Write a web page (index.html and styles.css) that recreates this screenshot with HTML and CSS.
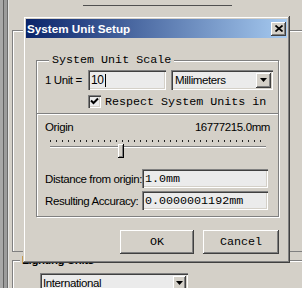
FILE: index.html
```html
<!DOCTYPE html>
<html lang="en">
<head>
    <meta charset="UTF-8">
    <title>System Unit Setup</title>
    <link rel="stylesheet" href="styles.css">
</head>
<body>
    <div id="screen">
        <div id="main">
            <div id="strip"></div>
            <div id="back">
                <div id="top-field"></div>
                <div class="bg-group" id="bg-scale"></div>
                <div class="bg-group" id="bg-lighting">
                    <span class="bg-label">Lighting Units</span>
                    <div class="field bg-select">
                        <span>International</span>
                        <span class="drop-btn"><svg width="7" height="4" viewBox="0 0 7 4"><path d="M0 0h7L3.5 4z"/></svg></span>
                    </div>
                </div>
            </div>
        </div>
        <div id="taskbar"></div>
    </div>

    <div id="dialog">
        <div id="title-bar">
            <span>System Unit Setup</span>
            <span class="close-btn"><svg width="8" height="7" viewBox="0 0 8 7"><path d="M0.5 0.5l7 6M7.5 0.5l-7 6" stroke="#000" stroke-width="1.7" fill="none"/></svg></span>
        </div>

        <div class="group">
            <span class="legend mono">System Unit Scale</span>
            <div class="scale-top">
                <div class="row">
                    <span class="unit-label">1 Unit =</span>
                    <div class="field unit-field">10<span class="caret"></span></div>
                    <div class="field select">
                        <span>Millimeters</span>
                        <span class="drop-btn"><svg width="7" height="4" viewBox="0 0 7 4"><path d="M0 0h7L3.5 4z"/></svg></span>
                    </div>
                </div>
                <div class="check-row">
                    <span class="check"><svg width="9" height="9" viewBox="0 0 9 9"><path d="M1 3.5l2.5 2.5L8 1.5" stroke="#000" stroke-width="2" fill="none"/></svg></span>
                    <span class="mono">Respect System Units in</span>
                </div>
            </div>
            <div class="scale-bottom">
                <div class="origin-row">
                    <span>Origin</span>
                    <span>16777215.0mm</span>
                </div>
                <div class="slider">
                    <div class="ticks"></div>
                    <div class="track"></div>
                    <div class="thumb"></div>
                </div>
                <div class="row value-row">
                    <span class="value-label">Distance from origin:</span>
                    <div class="field value-field mono">1.0mm</div>
                </div>
                <div class="row value-row">
                    <span class="value-label">Resulting Accuracy:</span>
                    <div class="field value-field mono">0.0000001192mm</div>
                </div>
            </div>
        </div>

        <div class="buttons">
            <button class="btn mono">OK</button>
            <button class="btn btn-wide mono">Cancel</button>
        </div>
    </div>
</body>
</html>
```

FILE: styles.css
```css
body {
    margin: 0;
    width: 302px;
    height: 288px;
    overflow: hidden;
    position: relative;
    background: #d4d0c8;
    font-family: "Liberation Sans", Arial, sans-serif;
    font-size: 11.5px;
    letter-spacing: -0.4px;
    color: #000;
    white-space: nowrap;
}
.mono {
    font-family: "Liberation Mono", "Courier New", monospace;
    font-size: 11.7px;
    letter-spacing: 0;
}

/* background window */
#screen {
    display: flex;
    flex-direction: column;
    height: 288px;
}
#main {
    flex: 1;
    display: flex;
}
#strip {
    width: 9px;
    background: linear-gradient(to right, #a8a8a8 0 3px, #606060 3px 4px, #9c9c9c 4px 7px, #6c6c6c 7px 8px, #e4e4e4 8px 9px);
}
#back {
    flex: 1;
}
#top-field {
    margin-left: 74px;
    width: 149px;
    height: 5px;
    border-bottom: 1px solid #505050;
}
.bg-group {
    margin-left: 3px;
    border-top: 1px solid #808080;
    border-left: 1px solid #808080;
    box-shadow: inset 1px 1px 0 #fff;
}
#bg-scale {
    margin-top: 24px;
    height: 220px;
    border-bottom: 1px solid #808080;
}
#bg-lighting {
    margin-top: 8px;
    position: relative;
    height: 30px;
}
.bg-label {
    position: absolute;
    left: 7px;
    top: -8px;
    padding: 0 2px;
    background: #d4d0c8;
    font-weight: bold;
    line-height: 14px;
}
.bg-select {
    margin: 12px 0 0 27px;
    width: 148px;
    height: 18px;
    padding-right: 2px;
    justify-content: space-between;
}
#taskbar {
    height: 2px;
    background: #c9c0a4;
}

/* dialog */
#dialog {
    position: absolute;
    left: 23px;
    top: 16px;
    width: 267px;
    height: 247px;
    box-sizing: border-box;
    padding: 3px;
    background: #d4d0c8;
    box-shadow: inset -1px -1px #404040, inset 1px 1px #d4d0c8, inset -2px -2px #808080, inset 2px 2px #fff;
}
#title-bar {
    height: 19px;
    display: flex;
    align-items: center;
    justify-content: space-between;
    padding: 0 1px 0 1px;
    background: linear-gradient(to right, #0a246a, #a6caf0);
    color: #fff;
    font-weight: bold;
    font-size: 11.7px;
    letter-spacing: 0;
}
.close-btn {
    width: 15px;
    height: 14px;
    display: flex;
    align-items: center;
    justify-content: center;
    background: #d4d0c8;
    box-shadow: inset -1px -1px #404040, inset 1px 1px #fff, inset -2px -2px #808080;
}

.group {
    position: relative;
    margin: 22px 8px 0 10px;
    border: 1px solid #808080;
    box-shadow: inset 1px 1px #fff, 1px 1px #fff;
}
.legend {
    position: absolute;
    left: 12px;
    top: -8px;
    padding: 0 3px;
    background: #d4d0c8;
    line-height: 14px;
}
.scale-top {
    padding: 9px 0 5px 8px;
}
.row {
    display: flex;
    align-items: center;
}
.row > * {
    flex-shrink: 0;
}
.unit-label {
    width: 43px;
}
.field {
    box-sizing: border-box;
    height: 20px;
    display: flex;
    align-items: center;
    padding-left: 3px;
    background: #ebebeb;
    box-shadow: inset 1px 1px #808080, inset 2px 2px #404040, inset -1px -1px #fff, inset -2px -2px #d4d0c8;
}
.unit-field {
    width: 78px;
    font-size: 12px;
}
.caret {
    width: 1px;
    height: 13px;
    margin-left: 1px;
    background: #000;
}
.select {
    width: 102px;
    margin-left: 5px;
    padding: 0 2px 0 4px;
    justify-content: space-between;
}
.drop-btn {
    width: 15px;
    height: 15px;
    display: flex;
    align-items: center;
    justify-content: center;
    background: #d4d0c8;
    box-shadow: inset -1px -1px #404040, inset 1px 1px #fff, inset -2px -2px #808080;
}
.bg-select .drop-btn {
    width: 13px;
    height: 14px;
}
.check-row {
    display: flex;
    align-items: center;
    margin-top: 5px;
    padding-left: 43px;
    height: 13px;
}
.check {
    width: 13px;
    height: 13px;
    margin-right: 4px;
    display: flex;
    align-items: center;
    justify-content: center;
    background: #ebebeb;
    box-shadow: inset 1px 1px #808080, inset 2px 2px #404040, inset -1px -1px #fff, inset -2px -2px #d4d0c8;
}

.scale-bottom {
    border-top: 1px solid #808080;
    box-shadow: inset 0 1px #fff;
    padding: 6px 8px 6px 8px;
}
.origin-row {
    display: flex;
    justify-content: space-between;
    line-height: 14px;
}
.slider {
    position: relative;
    height: 20px;
    margin: 2px 4px 0 5px;
}
.ticks {
    margin-top: 6px;
    height: 2px;
    background: repeating-linear-gradient(to right, #222 0 1px, transparent 1px 6px);
}
.track {
    margin-top: 4px;
    border-top: 1px solid #808080;
    border-bottom: 1px solid #fff;
}
.thumb {
    position: absolute;
    left: 68px;
    top: 4px;
    width: 6px;
    height: 14px;
    background: #d4d0c8;
    box-shadow: inset -1px -1px #000, inset 1px 1px #fff, inset -2px -2px #808080;
}
.value-row {
    margin-top: 3px;
}
.slider + .value-row {
    margin-top: 9px;
}
.value-label {
    width: 97px;
}
.value-field {
    width: 126px;
    height: 19px;
}

.buttons {
    display: flex;
    justify-content: flex-end;
    gap: 9px;
    margin: 13px 8px 0 0;
}
.btn {
    width: 74px;
    height: 24px;
    padding: 0;
    border: 0;
    background: #d4d0c8;
    color: #000;
    box-shadow: inset -1px -1px #404040, inset 1px 1px #fff, inset -2px -2px #808080;
}
.btn-wide {
    width: 76px;
}
```
